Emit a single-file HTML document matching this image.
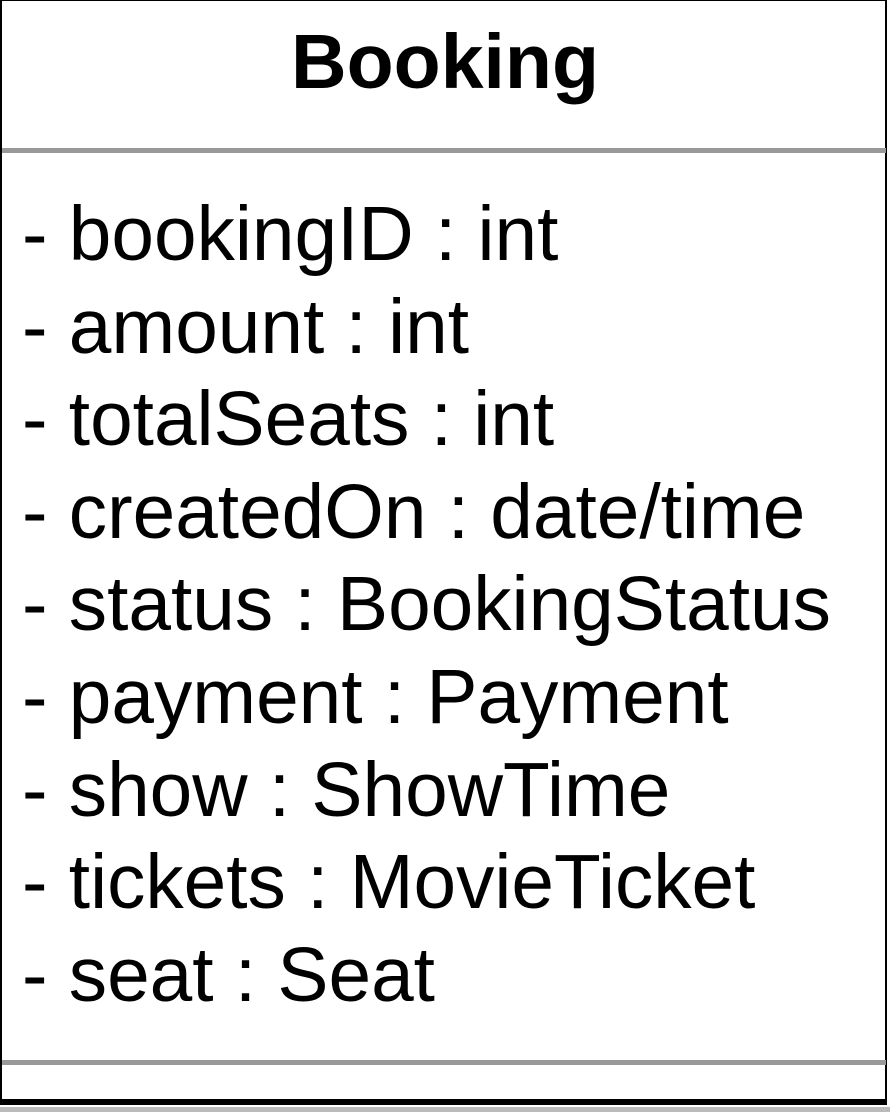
<!DOCTYPE html>
<html><head><style>
html,body{margin:0;padding:0;background:#fff;width:890px;height:1112px;overflow:hidden}
body{position:relative;font-family:"Liberation Sans",Arial,sans-serif;color:#000}
.box{position:absolute;left:0;top:0;width:887px;height:1105px;border-left:2px solid #000;border-right:2px solid #000;border-top:1px solid #000;border-bottom:6px solid #000;box-sizing:border-box}
.g{position:absolute;left:2px;width:884px;height:5px;background:#999}
h1{position:absolute;left:0;width:890px;margin:0;text-align:center;font-size:77px;font-weight:bold;line-height:76px;top:24px}
.a{position:absolute;left:22px;top:189px;font-size:76.6px;line-height:92.6px;white-space:pre}
.bot{position:absolute;left:0;top:1107px;width:890px;height:5px;background:#bbb}
</style></head><body>
<div class="box"></div>
<div class="g" style="top:148px"></div>
<div class="g" style="top:1060px"></div>
<div class="bot"></div>
<h1>Booking</h1>
<div class="a">- bookingID : int
- amount : int
- totalSeats : int
- createdOn : date/time
- status : BookingStatus
- payment : Payment
- show : ShowTime
- tickets : MovieTicket
- seat : Seat</div>
</body></html>
